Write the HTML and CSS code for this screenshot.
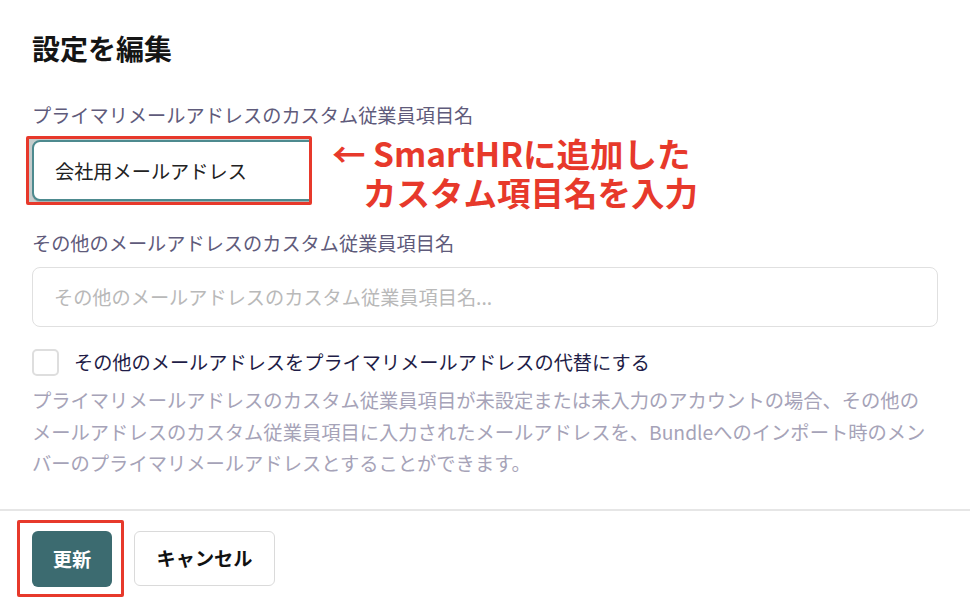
FILE: index.html
```html
<!DOCTYPE html>
<html lang="ja">
<head>
<meta charset="utf-8">
<title>設定を編集</title>
<link rel="stylesheet" href="styles.css">
</head>
<body>
<div class="page">
  <h1 class="title">設定を編集</h1>

  <div class="field first">
    <div class="label">プライマリメールアドレスのカスタム従業員項目名</div>
    <div class="input-row">
      <div class="highlight">
        <div class="input focused">会社用メールアドレス</div>
      </div>
      <p class="note">← SmartHRに追加した<br><span class="indent">カスタム項目名を入力</span></p>
    </div>
  </div>

  <div class="field second">
    <div class="label">その他のメールアドレスのカスタム従業員項目名</div>
    <div class="input wide"><span class="placeholder">その他のメールアドレスのカスタム従業員項目名...</span></div>
  </div>

  <div class="check-row">
    <span class="checkbox"></span>
    <span class="check-label">その他のメールアドレスをプライマリメールアドレスの代替にする</span>
  </div>

  <p class="help">プライマリメールアドレスのカスタム従業員項目が未設定または未入力のアカウントの場合、その他のメールアドレスのカスタム従業員項目に入力されたメールアドレスを、Bundleへのインポート時のメンバーのプライマリメールアドレスとすることができます。</p>
</div>

<div class="footer">
  <div class="btn-highlight">
    <button class="btn primary" type="button">更新</button>
  </div>
  <button class="btn secondary" type="button">キャンセル</button>
</div>
</body>
</html>
```

FILE: styles.css
```css
* { box-sizing: border-box; }

html, body {
  margin: 0;
  background: #ffffff;
}

body {
  font-family: "Noto Sans CJK JP", "Noto Sans", sans-serif;
  color: #1b1b1b;
  font-size: 19.2px;
}

.page {
  padding: 0 32px;
}

.title {
  margin: 30px 0 0;
  font-size: 28px;
  line-height: 36px;
  font-weight: 700;
  color: #151515;
}

.field.first {
  margin-top: 36px;
}

.label {
  font-size: 19.2px;
  line-height: 27px;
  color: #5f5b7b;
}

.input-row {
  display: flex;
  align-items: flex-start;
  margin-top: 7px;
}

.highlight {
  width: 286px;
  height: 69px;
  margin-left: -6px;
  border: 3px solid #e7392b;
  border-radius: 2px;
  padding: 1px 0 0 3px;
  overflow: hidden;
  background: #c5cccc;
  flex: none;
}

.input {
  display: flex;
  align-items: center;
  background: #ffffff;
  font-size: 19.2px;
  color: #222222;
}

.input.focused {
  width: 300px;
  height: 61px;
  border: 2px solid #4d8a8f;
  border-radius: 8px;
  padding-left: 21px;
  box-shadow: 0 1px 0 #a9b3b3;
}

.note {
  margin: -3px 0 -6px 20px;
  color: #e7392b;
  font-size: 33.5px;
  line-height: 39px;
  font-weight: 700;
  white-space: nowrap;
}

.note .indent {
  padding-left: 31px;
}

.field.second {
  margin-top: 25px;
}

.input.wide {
  margin-top: 10px;
  width: 100%;
  height: 60px;
  border: 1.5px solid #e0e0e0;
  border-radius: 8px;
  padding-left: 21px;
}

.placeholder {
  color: #b9b9b9;
}

.check-row {
  display: flex;
  align-items: center;
  margin-top: 22px;
}

.checkbox {
  width: 27px;
  height: 27px;
  border: 2px solid #dedede;
  border-radius: 5px;
  background: #ffffff;
  flex: none;
}

.check-label {
  margin-left: 15px;
  line-height: 27px;
  color: #1f1d47;
}

.help {
  margin: 9px 0 0;
  line-height: 31.5px;
  color: #a6a3b8;
  font-size: 19.3px;
}

.footer {
  margin-top: 29px;
  border-top: 2px solid #e6e6e6;
  padding: 9px 0 0 17px;
  display: flex;
  align-items: center;
  gap: 10px;
}

.btn-highlight {
  border: 3px solid #e7392b;
  border-radius: 2px;
  padding: 8px 9px 7px 12px;
}

.btn {
  font-family: "Noto Sans CJK JP", "Noto Sans", sans-serif;
  font-size: 19.2px;
  font-weight: 700;
  border-radius: 6px;
  cursor: pointer;
  display: block;
  margin: 0;
}

.btn.primary {
  width: 80px;
  height: 56px;
  background: #3c6b70;
  color: #ffffff;
  border: none;
}

.btn.secondary {
  width: 141px;
  height: 55px;
  background: #ffffff;
  color: #111111;
  border: 1.5px solid #dadada;
}
```
